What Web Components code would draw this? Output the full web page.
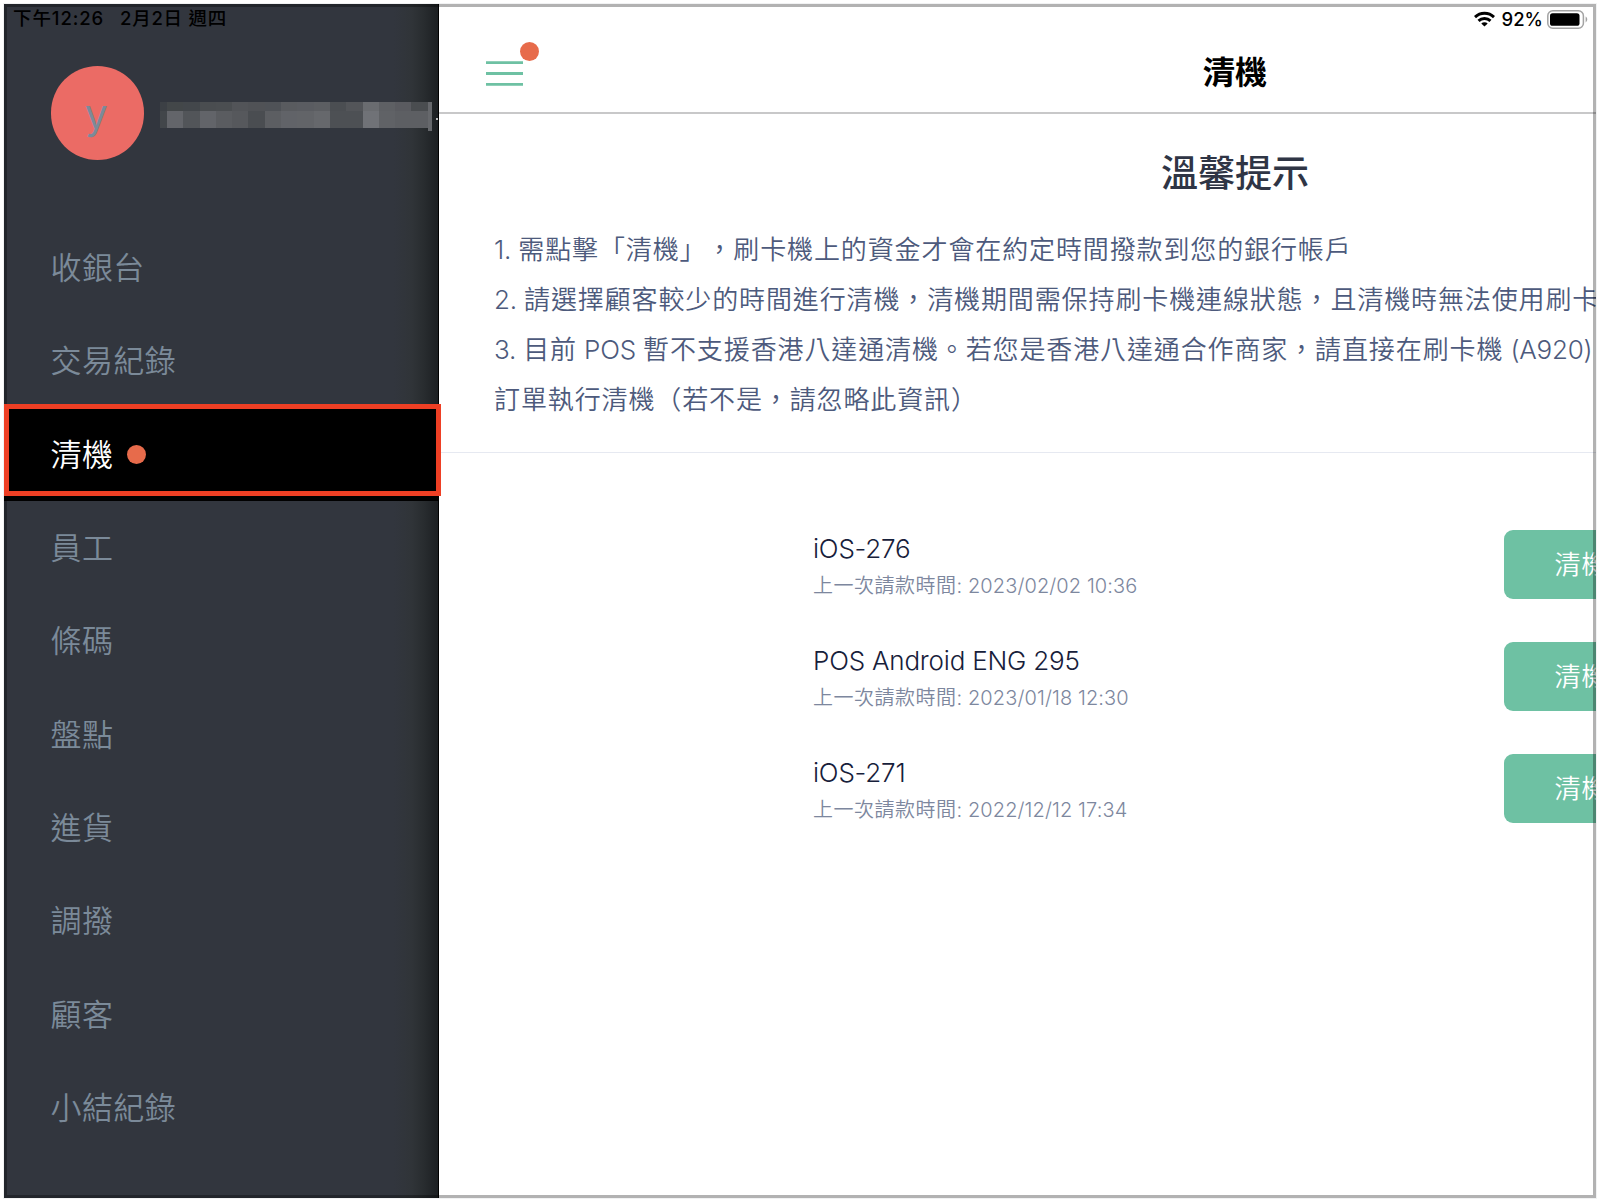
<!DOCTYPE html>
<html lang="zh-Hant">
<head>
<meta charset="utf-8">
<title>清機</title>
<style>
    html, body {
        margin: 0;
        height: 100%;
        overflow: hidden;
        background: #fff;
    }
    body {
        font-family: Inter, "Noto Sans CJK TC", sans-serif;
        text-spacing-trim: space-all;
    }
</style>
</head>
<body>
<pos-app></pos-app>

<script>
class StatusBar extends HTMLElement {
    constructor() {
        super();
        this.attachShadow({ mode: 'open' });
    }

    connectedCallback() {
        this.shadowRoot.innerHTML = `
            <style>
                :host {
                    display: flex;
                    align-items: center;
                    height: 24px;
                    padding: 0 7px 0 9px;
                    box-sizing: border-box;
                    font-size: 18.5px;
                    font-weight: 450;
                    line-height: 22px;
                    color: #000;
                    white-space: pre;
                }
                .time { margin-top: -2px; letter-spacing: 0.9px; }
                .date { margin: -2px 0 0 16px; letter-spacing: 0.75px; }
                .spacer { flex: 1; }
                .wifi { margin-right: 7px; }
                .percent { margin-right: 4px; }
                svg { display: block; }
            </style>
            <span class="time">下午12:26</span>
            <span class="date">2月2日 週四</span>
            <span class="spacer"></span>
            <svg class="wifi" width="21" height="16" viewBox="0 0 21 16">
                <g fill="none" stroke="#000" stroke-width="2.9">
                    <path d="M1 6.1a13.6 13.6 0 0 1 19 0"/>
                    <path d="M4.5 9.9a8.6 8.6 0 0 1 12 0"/>
                </g>
                <path d="M10.5 15.6 7.3 12.5a4.6 4.6 0 0 1 6.4 0z"/>
            </svg>
            <span class="percent">92%</span>
            <svg width="42" height="19" viewBox="0 0 42 19">
                <rect x="0.8" y="0.8" width="35.6" height="17.4" rx="5" fill="#fff" stroke="#a3a3a3" stroke-width="1.5"/>
                <rect x="3" y="3.2" width="29.5" height="12.6" rx="2.6"/>
                <path d="M38.6 6.6c2.2 1 2.2 4.8 0 5.8z" fill="#a3a3a3"/>
            </svg>
        `;
    }
}

class RedDot extends HTMLElement {
    constructor() {
        super();
        this.attachShadow({ mode: 'open' });
    }

    connectedCallback() {
        this.shadowRoot.innerHTML = `
            <style>
                :host {
                    display: block;
                    width: 19px;
                    height: 19px;
                    border-radius: 50%;
                    background: #e76b4b;
                }
            </style>
        `;
    }
}

class UserBadge extends HTMLElement {
    constructor() {
        super();
        this.attachShadow({ mode: 'open' });

        // Pixelated account name: [width, upper colour, lower colour]
        this.BLOCKS = [
            [7, '#3c4045', '#42464a'],
            [16.3, '#434749', '#63656a'],
            [16.3, '#43474b', '#525559'],
            [16.3, '#4a4d50', '#626469'],
            [16.3, '#4b4e51', '#5a5c60'],
            [16.3, '#525458', '#56585c'],
            [16.3, '#505256', '#4a4d51'],
            [16.3, '#4f5257', '#5c5e62'],
            [16.3, '#595b5f', '#616368'],
            [16.3, '#5a5c61', '#626468'],
            [16.3, '#5c5e62', '#66686c'],
            [16.3, '#4b4e52', '#4d5054'],
            [16.3, '#535559', '#4d5054'],
            [16.3, '#6a6c70', '#707277'],
            [16.3, '#5e6064', '#606266'],
            [16.3, '#5a5b60', '#5d5f63'],
            [16.3, '#4a4d50', '#5d5f63']
        ];
    }

    connectedCallback() {
        const blocks = this.BLOCKS.map(([w, top, bottom]) =>
            `<i style="width:${w}px;background:linear-gradient(${top} 8.5px, ${bottom} 8.5px)"></i>`
        ).join('');
        this.shadowRoot.innerHTML = `
            <style>
                :host {
                    display: flex;
                    align-items: flex-start;
                    height: 94px;
                }
                .avatar {
                    width: 93.5px;
                    height: 93.5px;
                    border-radius: 50%;
                    background: #eb6b65;
                    color: #7b8a99;
                    font-size: 41px;
                    line-height: 97px;
                    text-align: center;
                    text-indent: -2px;
                }
                .name {
                    display: flex;
                    margin: 36px 0 0 16px;
                }
                .name i { height: 25.5px; }
                .name .last { width: 4px; height: 29px; background: #66686c; }
                .name .tail { width: 2px; height: 2px; margin: 16px 0 0 4px; background: #b9babc; }
            </style>
            <div class="avatar"><slot></slot></div>
            <div class="name">${blocks}<i class="last"></i><i class="tail"></i></div>
        `;
    }
}

class MenuItem extends HTMLElement {
    constructor() {
        super();
        this.attachShadow({ mode: 'open' });
    }

    connectedCallback() {
        this.shadowRoot.innerHTML = `
            <style>
                :host {
                    position: relative;
                    display: flex;
                    align-items: center;
                    gap: 13.5px;
                    height: 93.3px;
                    padding: 0 46.5px;
                    box-sizing: border-box;
                    font-size: 31px;
                    font-weight: 350;
                    letter-spacing: 0.4px;
                    color: #7b8a99;
                }
                span { margin-top: -4px; }
                :host([active]) {
                    background: #000;
                    color: #fff;
                }
                /* red marker sits over the row and slightly outside of it */
                :host([active])::after {
                    content: "";
                    position: absolute;
                    left: 0;
                    top: -4px;
                    width: 436.5px;
                    height: 92px;
                    box-sizing: border-box;
                    border: 5.5px solid #ee3f24;
                    z-index: 2;
                }
            </style>
            <span><slot></slot></span>
            ${this.hasAttribute('active') ? '<red-dot></red-dot>' : ''}
        `;
    }
}

class SideMenu extends HTMLElement {
    constructor() {
        super();
        this.attachShadow({ mode: 'open' });
        this.ITEMS = ['收銀台', '交易紀錄', '清機', '員工', '條碼', '盤點', '進貨', '調撥', '顧客', '小結紀錄'];
        this.ACTIVE = '清機';
    }

    connectedCallback() {
        this.shadowRoot.innerHTML = `
            <style>
                :host {
                    display: block;
                    flex: none;
                    width: 435px;
                    height: 100%;
                    box-sizing: border-box;
                    padding-top: 62px;
                    border-right: 1px solid #000;
                    background: linear-gradient(90deg, #32363e 390px, #303438 408px, #282c2f 420px, #1c1f22 434px);
                }
                user-badge { margin-left: 46.5px; }
                nav { margin-top: 61px; }
            </style>
            <user-badge>y</user-badge>
            <nav>
                ${this.ITEMS.map(t => `<menu-item${t === this.ACTIVE ? ' active' : ''}>${t}</menu-item>`).join('')}
            </nav>
        `;
    }
}

class NavHeader extends HTMLElement {
    constructor() {
        super();
        this.attachShadow({ mode: 'open' });
    }

    connectedCallback() {
        this.shadowRoot.innerHTML = `
            <style>
                :host {
                    display: grid;
                    grid-template-columns: 1fr auto 1fr;
                    align-items: center;
                    height: 110px;
                    padding: 30px 47px 0;
                    box-sizing: border-box;
                    border-bottom: 2px solid #c8c8c9;
                }
                .burger {
                    position: relative;
                    width: 37px;
                    height: 25px;
                }
                .burger svg { display: block; }
                red-dot {
                    position: absolute;
                    left: 34px;
                    top: -18.5px;
                }
                h1 {
                    margin: 0;
                    font-size: 32px;
                    font-weight: 600;
                    line-height: 40px;
                    color: #000;
                }
            </style>
            <div class="burger">
                <svg width="37" height="25" viewBox="0 0 37 25" stroke="#6ec1a3" stroke-width="2.8">
                    <path d="M0 1.6h37M0 12.5h37M0 23.4h37"/>
                </svg>
                <red-dot></red-dot>
            </div>
            <h1><slot></slot></h1>
        `;
    }
}

class TipPanel extends HTMLElement {
    constructor() {
        super();
        this.attachShadow({ mode: 'open' });
    }

    connectedCallback() {
        this.shadowRoot.innerHTML = `
            <style>
                :host {
                    display: block;
                    height: 339px;
                    padding: 35px 55px 0;
                    box-sizing: border-box;
                    border-bottom: 1.5px solid #e6e9f1;
                }
                h2 {
                    margin: 0 0 26px;
                    font-size: 37px;
                    font-weight: 500;
                    line-height: 50px;
                    text-align: center;
                    color: #2f3545;
                }
                p {
                    margin: 0;
                    font-size: 26px;
                    font-weight: 350;
                    line-height: 50px;
                    letter-spacing: 0.88px;
                    white-space: nowrap;
                    color: #4d5a7c;
                }
                .latin { letter-spacing: -0.2px; }
            </style>
            <h2>溫馨提示</h2>
            <p><span class="latin">1. </span>需點擊「清機」，刷卡機上的資金才會在約定時間撥款到您的銀行帳戶</p>
            <p><span class="latin">2. </span>請選擇顧客較少的時間進行清機，清機期間需保持刷卡機連線狀態，且清機時無法使用刷卡</p>
            <p><span class="latin">3. </span>目前<span class="latin"> POS </span>暫不支援香港八達通清機。若您是香港八達通合作商家，請直接在刷卡機<span class="latin"> (A920)</span></p>
            <p>訂單執行清機（若不是，請忽略此資訊）</p>
        `;
    }
}

class DeviceRow extends HTMLElement {
    constructor() {
        super();
        this.attachShadow({ mode: 'open' });
    }

    connectedCallback() {
        this.shadowRoot.innerHTML = `
            <style>
                :host {
                    display: flex;
                    justify-content: space-between;
                    height: 69px;
                }
                .name {
                    font-size: 26px;
                    font-weight: 350;
                    line-height: 37px;
                    letter-spacing: -0.2px;
                    color: #17203a;
                }
                .last {
                    font-size: 20px;
                    font-weight: 350;
                    line-height: 38px;
                    letter-spacing: 0.5px;
                    color: #7d879e;
                }
                .last span { letter-spacing: 0.1px; }
                button {
                    width: 153px;
                    height: 68.5px;
                    padding: 0 0 3px 2px;
                    border: 0;
                    border-radius: 9px;
                    background: #6ec1a3;
                    color: #fff;
                    font: 350 26px Inter, "Noto Sans CJK TC", sans-serif;
                    letter-spacing: 0.9px;
                }
            </style>
            <div>
                <div class="name"><slot></slot></div>
                <div class="last">上一次請款時間<span>: ${this.getAttribute('time')}</span></div>
            </div>
            <button>清機</button>
        `;
    }
}

class SettleView extends HTMLElement {
    constructor() {
        super();
        this.attachShadow({ mode: 'open' });
        this.DEVICES = [
            { name: 'iOS-276', time: '2023/02/02 10:36' },
            { name: 'POS Android ENG 295', time: '2023/01/18 12:30' },
            { name: 'iOS-271', time: '2022/12/12 17:34' }
        ];
    }

    connectedCallback() {
        this.shadowRoot.innerHTML = `
            <style>
                :host {
                    display: block;
                    flex: none;
                    width: 1592px;
                    background: #fff;
                }
                .devices {
                    display: flex;
                    flex-direction: column;
                    gap: 43px;
                    width: 844px;
                    margin: 77px auto 0;
                }
            </style>
            <nav-header>清機</nav-header>
            <tip-panel></tip-panel>
            <div class="devices">
                ${this.DEVICES.map(d => `<device-row time="${d.time}">${d.name}</device-row>`).join('')}
            </div>
        `;
    }
}

class PosApp extends HTMLElement {
    constructor() {
        super();
        this.attachShadow({ mode: 'open' });
    }

    connectedCallback() {
        this.shadowRoot.innerHTML = `
            <style>
                :host {
                    display: block;
                    height: 1202px;
                    padding: 4px;
                    box-sizing: border-box;
                }
                .screen {
                    position: relative;
                    height: 1194px;
                    box-shadow: 0 0 0 1px #f1f2f3;
                }
                /* the open menu pushes the page to the right, the rest is cut off */
                .panes {
                    display: flex;
                    height: 100%;
                    overflow: hidden;
                }
                status-bar {
                    position: absolute;
                    left: 0;
                    right: 0;
                    top: 3px;
                    z-index: 3;
                }
                .frame {
                    position: absolute;
                    inset: 0;
                    z-index: 1;
                    border: 3px solid rgba(0, 0, 0, 0.3);
                }
            </style>
            <div class="screen">
                <div class="frame"></div>
                <div class="panes">
                    <side-menu></side-menu>
                    <settle-view></settle-view>
                </div>
                <status-bar></status-bar>
            </div>
        `;
    }
}

customElements.define('red-dot', RedDot);
customElements.define('status-bar', StatusBar);
customElements.define('user-badge', UserBadge);
customElements.define('menu-item', MenuItem);
customElements.define('side-menu', SideMenu);
customElements.define('nav-header', NavHeader);
customElements.define('tip-panel', TipPanel);
customElements.define('device-row', DeviceRow);
customElements.define('settle-view', SettleView);
customElements.define('pos-app', PosApp);
</script>
</body>
</html>
